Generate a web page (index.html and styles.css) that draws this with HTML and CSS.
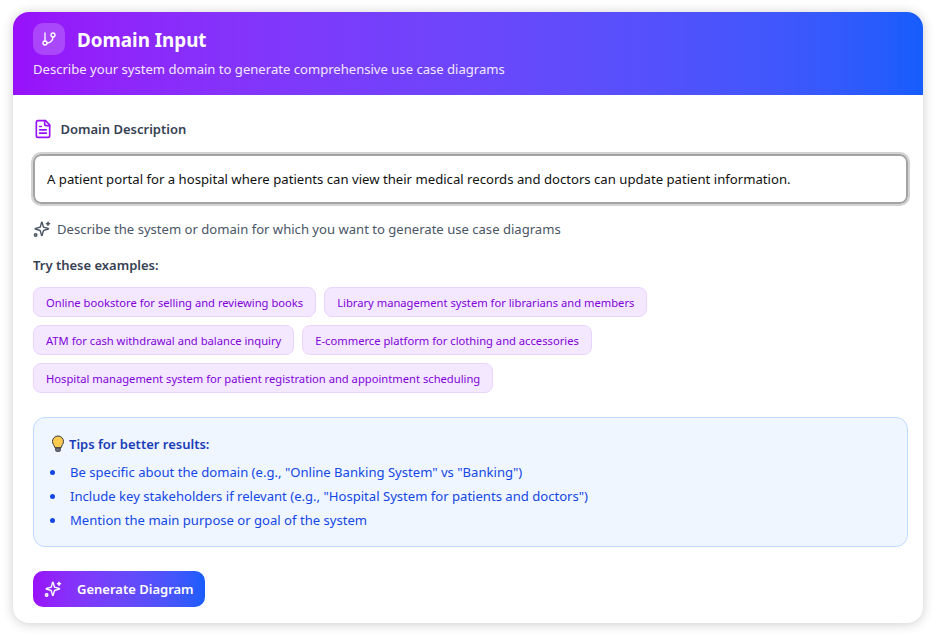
FILE: index.html
```html
<!DOCTYPE html>
<html lang="en">
<head>
  <meta charset="UTF-8">
  <title>Domain Input</title>
  <link rel="stylesheet" href="styles.css">
</head>
<body>
  <div class="card">
    <div class="card-header">
      <div class="title-row">
        <span class="title-icon">
          <svg width="16" height="16" viewBox="0 0 24 24" fill="none" stroke="#fff" stroke-width="2" stroke-linecap="round" stroke-linejoin="round"><line x1="6" y1="3" x2="6" y2="15"/><circle cx="18" cy="6" r="3"/><circle cx="6" cy="18" r="3"/><path d="M18 9a9 9 0 0 1-9 9"/></svg>
        </span>
        <h1>Domain Input</h1>
      </div>
      <p class="subtitle">Describe your system domain to generate comprehensive use case diagrams</p>
    </div>
    <div class="card-body">
      <label class="field-label" for="domain">
        <svg width="20" height="20" viewBox="0 0 24 24" fill="none" stroke="#9810fa" stroke-width="2" stroke-linecap="round" stroke-linejoin="round"><path d="M15 2H6a2 2 0 0 0-2 2v16a2 2 0 0 0 2 2h12a2 2 0 0 0 2-2V7z"/><path d="M14 2v4a2 2 0 0 0 2 2h4"/><path d="M16 13H8"/><path d="M16 17H8"/><path d="M10 9H8"/></svg>
        Domain Description
      </label>
      <input id="domain" class="domain-input" type="text" value="A patient portal for a hospital where patients can view their medical records and doctors can update patient information.">
      <p class="hint">
        <svg width="18" height="18" viewBox="0 0 24 24" fill="none" stroke="#4a5565" stroke-width="2" stroke-linecap="round" stroke-linejoin="round"><path d="M9.94 15.5A2 2 0 0 0 8.5 14.06l-6.14-1.58a.5.5 0 0 1 0-.96L8.5 9.94A2 2 0 0 0 9.94 8.5l1.58-6.14a.5.5 0 0 1 .96 0L14.06 8.5A2 2 0 0 0 15.5 9.94l6.14 1.58a.5.5 0 0 1 0 .96L15.5 14.06a2 2 0 0 0-1.44 1.44l-1.58 6.14a.5.5 0 0 1-.96 0z" transform="translate(1 1) scale(.9)"/><path d="M20 3v4"/><path d="M22 5h-4"/><circle cx="3.5" cy="20" r="1.6"/></svg>
        Describe the system or domain for which you want to generate use case diagrams
      </p>
      <p class="examples-label">Try these examples:</p>
      <div class="examples">
        <button class="chip">Online bookstore for selling and reviewing books</button>
        <button class="chip">Library management system for librarians and members</button>
        <button class="chip">ATM for cash withdrawal and balance inquiry</button>
        <button class="chip">E-commerce platform for clothing and accessories</button>
        <button class="chip">Hospital management system for patient registration and appointment scheduling</button>
      </div>
      <div class="tips">
        <h2>
          <svg width="16" height="18" viewBox="0 0 16 18"><path d="M8 1a5.5 5.5 0 0 0-5.5 5.5c0 2.6 1.8 3.6 2.4 6.2h6.2c.6-2.6 2.4-3.6 2.4-6.2A5.5 5.5 0 0 0 8 1z" fill="#fdc94f" stroke="#3b3b3b" stroke-width="1"/><path d="M5.6 13h4.8v2.4a1 1 0 0 1-1 1H6.6a1 1 0 0 1-1-1z" fill="#6b7280" stroke="#3b3b3b" stroke-width=".8"/></svg>
          Tips for better results:
        </h2>
        <ul>
          <li>Be specific about the domain (e.g., "Online Banking System" vs "Banking")</li>
          <li>Include key stakeholders if relevant (e.g., "Hospital System for patients and doctors")</li>
          <li>Mention the main purpose or goal of the system</li>
        </ul>
      </div>
      <button class="generate">
        <svg width="18" height="18" viewBox="0 0 24 24" fill="none" stroke="#fff" stroke-width="2" stroke-linecap="round" stroke-linejoin="round"><path d="M9.94 15.5A2 2 0 0 0 8.5 14.06l-6.14-1.58a.5.5 0 0 1 0-.96L8.5 9.94A2 2 0 0 0 9.94 8.5l1.58-6.14a.5.5 0 0 1 .96 0L14.06 8.5A2 2 0 0 0 15.5 9.94l6.14 1.58a.5.5 0 0 1 0 .96L15.5 14.06a2 2 0 0 0-1.44 1.44l-1.58 6.14a.5.5 0 0 1-.96 0z" transform="translate(1 1) scale(.9)"/><path d="M20 3v4"/><path d="M22 5h-4"/><circle cx="3.5" cy="20" r="1.6"/></svg>
        Generate Diagram
      </button>
    </div>
  </div>
</body>
</html>
```

FILE: styles.css
```css
* {
  margin: 0;
  padding: 0;
  box-sizing: border-box;
}
body {
  font-family: "Noto Sans", "Open Sans", sans-serif;
  background-color: #fff;
  padding: 12px 14px 13px 13px;
}
.card {
  background: #fff;
  border-radius: 16px;
  box-shadow: 0 1px 12px rgba(0, 0, 0, 0.2);
  overflow: hidden;
  height: 611px;
}
.card-header {
  height: 83px;
  padding: 11px 20px 0;
  color: #fff;
  background: linear-gradient(to right in oklab, #9810fa, #155dfc);
}
.title-row {
  display: flex;
  align-items: center;
  gap: 12px;
}
.title-icon {
  width: 32px;
  height: 32px;
  border-radius: 10px;
  background: rgba(255, 255, 255, 0.2);
  display: flex;
  align-items: center;
  justify-content: center;
}
h1 {
  font-size: 18.8px;
  font-weight: 700;
  line-height: 34px;
  height: 32px;
}
.subtitle {
  font-size: 13.08px;
  line-height: 20px;
  margin-top: 4px;
  color: #f3e8ff;
}
.card-body {
  padding: 24px 15px 0 20px;
}
.field-label {
  display: flex;
  align-items: center;
  gap: 7.5px;
  height: 20px;
  font-size: 13px;
  font-weight: 600;
  color: #364153;
}
.domain-input {
  display: block;
  width: 100%;
  height: 50px;
  margin-top: 15px;
  padding: 0 12px;
  font: 13.15px "Noto Sans", "Open Sans", sans-serif;
  color: #111;
  background: #fff;
  border: 2px solid #a3a3a3;
  border-radius: 8px;
  outline: 2px solid #d2d2d2;
  outline-offset: 0;
}
.hint {
  display: flex;
  align-items: center;
  gap: 6px;
  margin-top: 15px;
  height: 20px;
  font-size: 13.08px;
  color: #4a5565;
}
.examples-label {
  margin-top: 16px;
  font-size: 13px;
  line-height: 20px;
  font-weight: 600;
  color: #364153;
}
.examples {
  display: flex;
  flex-wrap: wrap;
  gap: 8px;
  margin-top: 12px;
}
.chip {
  height: 30px;
  padding: 0 12px;
  font: 11.2px "Noto Sans", "Open Sans", sans-serif;
  color: #8200db;
  background: #f3e8ff;
  border: 1px solid #e9d4ff;
  border-radius: 8px;
}
.tips {
  margin-top: 24px;
  height: 130px;
  padding: 16px;
  background: #eff6ff;
  border: 1px solid #bedbff;
  border-radius: 12px;
}
.tips h2 {
  display: flex;
  align-items: center;
  gap: 3px;
  font-size: 13px;
  line-height: 20px;
  font-weight: 600;
  color: #193cb8;
}
.tips ul {
  margin-top: 6px;
  list-style: none;
  color: #1447e6;
  font-size: 13.08px;
}
.tips li {
  line-height: 24px;
  display: flex;
  align-items: center;
  gap: 15px;
}
.tips li::before {
  content: "";
  width: 5px;
  height: 5px;
  border-radius: 50%;
  background: #1447e6;
}
.generate {
  display: flex;
  align-items: center;
  gap: 15px;
  margin-top: 24px;
  height: 36px;
  width: 172px;
  padding: 0 11px;
  font: 600 13px "Noto Sans", "Open Sans", sans-serif;
  white-space: nowrap;
  color: #fff;
  background: linear-gradient(to right in oklab, #9810fa, #155dfc);
  border: none;
  border-radius: 10px;
}
```
